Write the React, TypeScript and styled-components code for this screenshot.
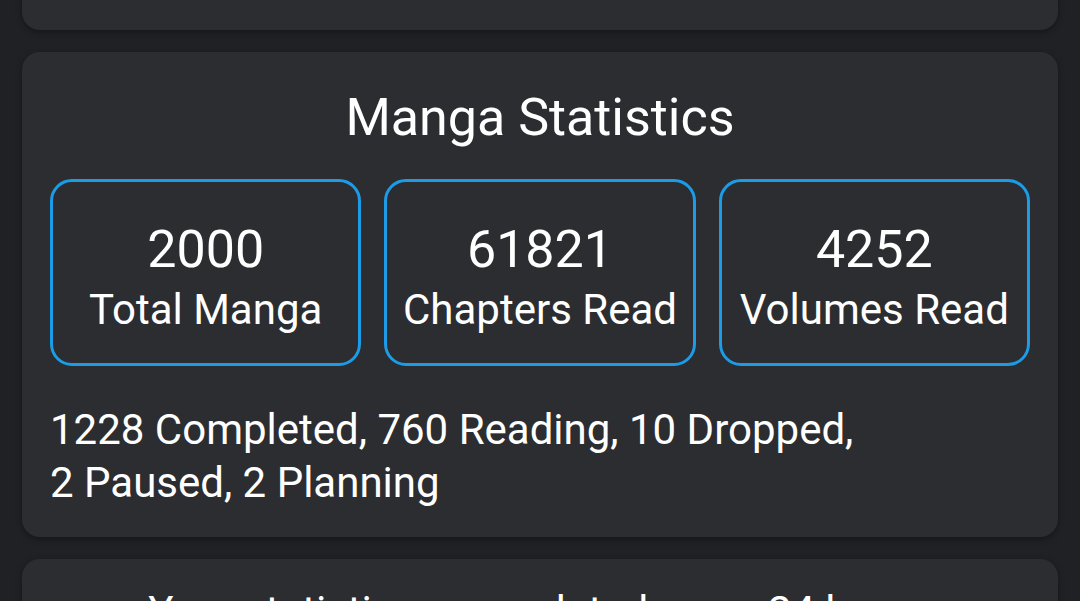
import { useLayoutEffect, useRef } from 'react';
import styled, { createGlobalStyle } from 'styled-components';

const GlobalStyle = createGlobalStyle`
  html, body {
    margin: 0;
    padding: 0;
    background: #202124;
  }
  body {
    font-family: Roboto, "Noto Sans", sans-serif;
    color: #ffffff;
  }
`;

interface StatBox {
  value: number;
  label: string;
}

const mangaBoxes: StatBox[] = [
  { value: 2000, label: 'Total Manga' },
  { value: 61821, label: 'Chapters Read' },
  { value: 4252, label: 'Volumes Read' },
];

const App = () => {
  const screenRef = useRef<HTMLDivElement>(null);

  // the list is shown scrolled down to the manga card
  useLayoutEffect(() => {
    if (screenRef.current) {
      screenRef.current.scrollTop = 477;
    }
  }, []);

  return (
    <>
      <GlobalStyle />
      <Screen ref={screenRef}>
        <CardList>
          <Card>
            <CardTitle>Anime Statistics</CardTitle>
            <BoxRow>
              <Box>
                <BoxValue>1620</BoxValue>
                <BoxLabel>Total Anime</BoxLabel>
              </Box>
              <Box>
                <BoxValue>21790</BoxValue>
                <BoxLabel>Episodes</BoxLabel>
              </Box>
              <Box>
                <BoxValue>152</BoxValue>
                <BoxLabel>Days Watched</BoxLabel>
              </Box>
            </BoxRow>
            <Summary>
              1590 Completed, 15 Watching,
              <br />
              12 Dropped, 3 Paused
            </Summary>
          </Card>
          <Card>
            <CardTitle>Manga Statistics</CardTitle>
            <BoxRow>
              {mangaBoxes.map((box) => (
                <Box key={box.label}>
                  <BoxValue>{box.value}</BoxValue>
                  <BoxLabel>{box.label}</BoxLabel>
                </Box>
              ))}
            </BoxRow>
            <Summary>
              1228 Completed, 760 Reading, 10 Dropped,
              <br />
              2 Paused, 2 Planning
            </Summary>
          </Card>
          <Card>
            <Note>Your statistics are updated every 24 hours</Note>
          </Card>
        </CardList>
      </Screen>
    </>
  );
};

export default App;

const Screen = styled.div`
  height: 601px;
  overflow-y: auto;
  scrollbar-width: none;
  &::-webkit-scrollbar {
    display: none;
  }
`;

const CardList = styled.div`
  display: flex;
  flex-direction: column;
  gap: 22px;
  padding: 22px;
`;

const Card = styled.section`
  background: #2c2d31;
  border-radius: 18px;
  box-shadow: 0 2px 6px rgba(0, 0, 0, 0.35);
  padding: 26px 28px 28px;
  display: flex;
  flex-direction: column;
`;

const CardTitle = styled.h2`
  margin: 0 0 21px;
  font-size: 52px;
  font-weight: 400;
  line-height: 80px;
  text-align: center;
`;

const BoxRow = styled.div`
  display: grid;
  grid-template-columns: repeat(3, 1fr);
  gap: 23px;
`;

const Box = styled.div`
  height: 187px;
  box-sizing: border-box;
  padding-top: 11px;
  border: 3px solid #1c9be6;
  border-radius: 22px;
  display: flex;
  flex-direction: column;
  align-items: center;
  justify-content: center;
`;

const BoxValue = styled.div`
  font-size: 52px;
  line-height: 64px;
`;

const BoxLabel = styled.div`
  font-size: 42px;
  line-height: 56px;
  white-space: nowrap;
`;

const Summary = styled.p`
  margin: 37px 0 0;
  font-size: 42px;
  line-height: 53px;
`;

const Note = styled.p`
  margin: 0;
  font-size: 42px;
  line-height: 53px;
  text-align: center;
`;
